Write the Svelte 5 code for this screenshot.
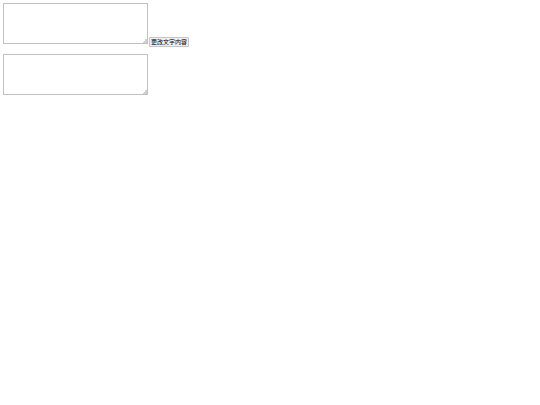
<script>
  let source = $state('');
  let result = $state('');

  function changeText() {
    result = source;
  }
</script>

<main>
  <div class="row">
    <textarea aria-label="原文字" bind:value={source}></textarea>
    <button type="button" onclick={changeText}>更改文字内容</button>
  </div>
  <div class="row">
    <textarea aria-label="新文字" bind:value={result}></textarea>
  </div>
</main>

<style>
  :global(body) {
    margin: 0;
    background: #fff;
  }

  main {
    display: flex;
    flex-direction: column;
    gap: 10px;
    padding: 3px;
  }

  .row {
    display: flex;
    align-items: flex-end;
    gap: 1px;
  }

  textarea {
    box-sizing: border-box;
    width: 145px;
    height: 41px;
    margin: 0;
    padding: 1px;
    border: 1px solid #c0c0c0;
    border-radius: 0;
    background: #fff;
    font: 6px/8px "Liberation Mono", "Noto Sans CJK SC", monospace;
    resize: both;
  }

  textarea::-webkit-resizer {
    background: linear-gradient(135deg, transparent 50%, #d0d0d0 50%) right bottom / 5px 5px no-repeat;
  }

  button {
    box-sizing: border-box;
    height: 10px;
    margin: 0 0 -3px;
    padding: 0 1px;
    border: 1px solid #c6c6c6;
    border-radius: 1px;
    background: #efefef;
    color: #000;
    font: 6px/8px "Liberation Sans", "Noto Sans CJK SC", sans-serif;
    white-space: nowrap;
  }
</style>
